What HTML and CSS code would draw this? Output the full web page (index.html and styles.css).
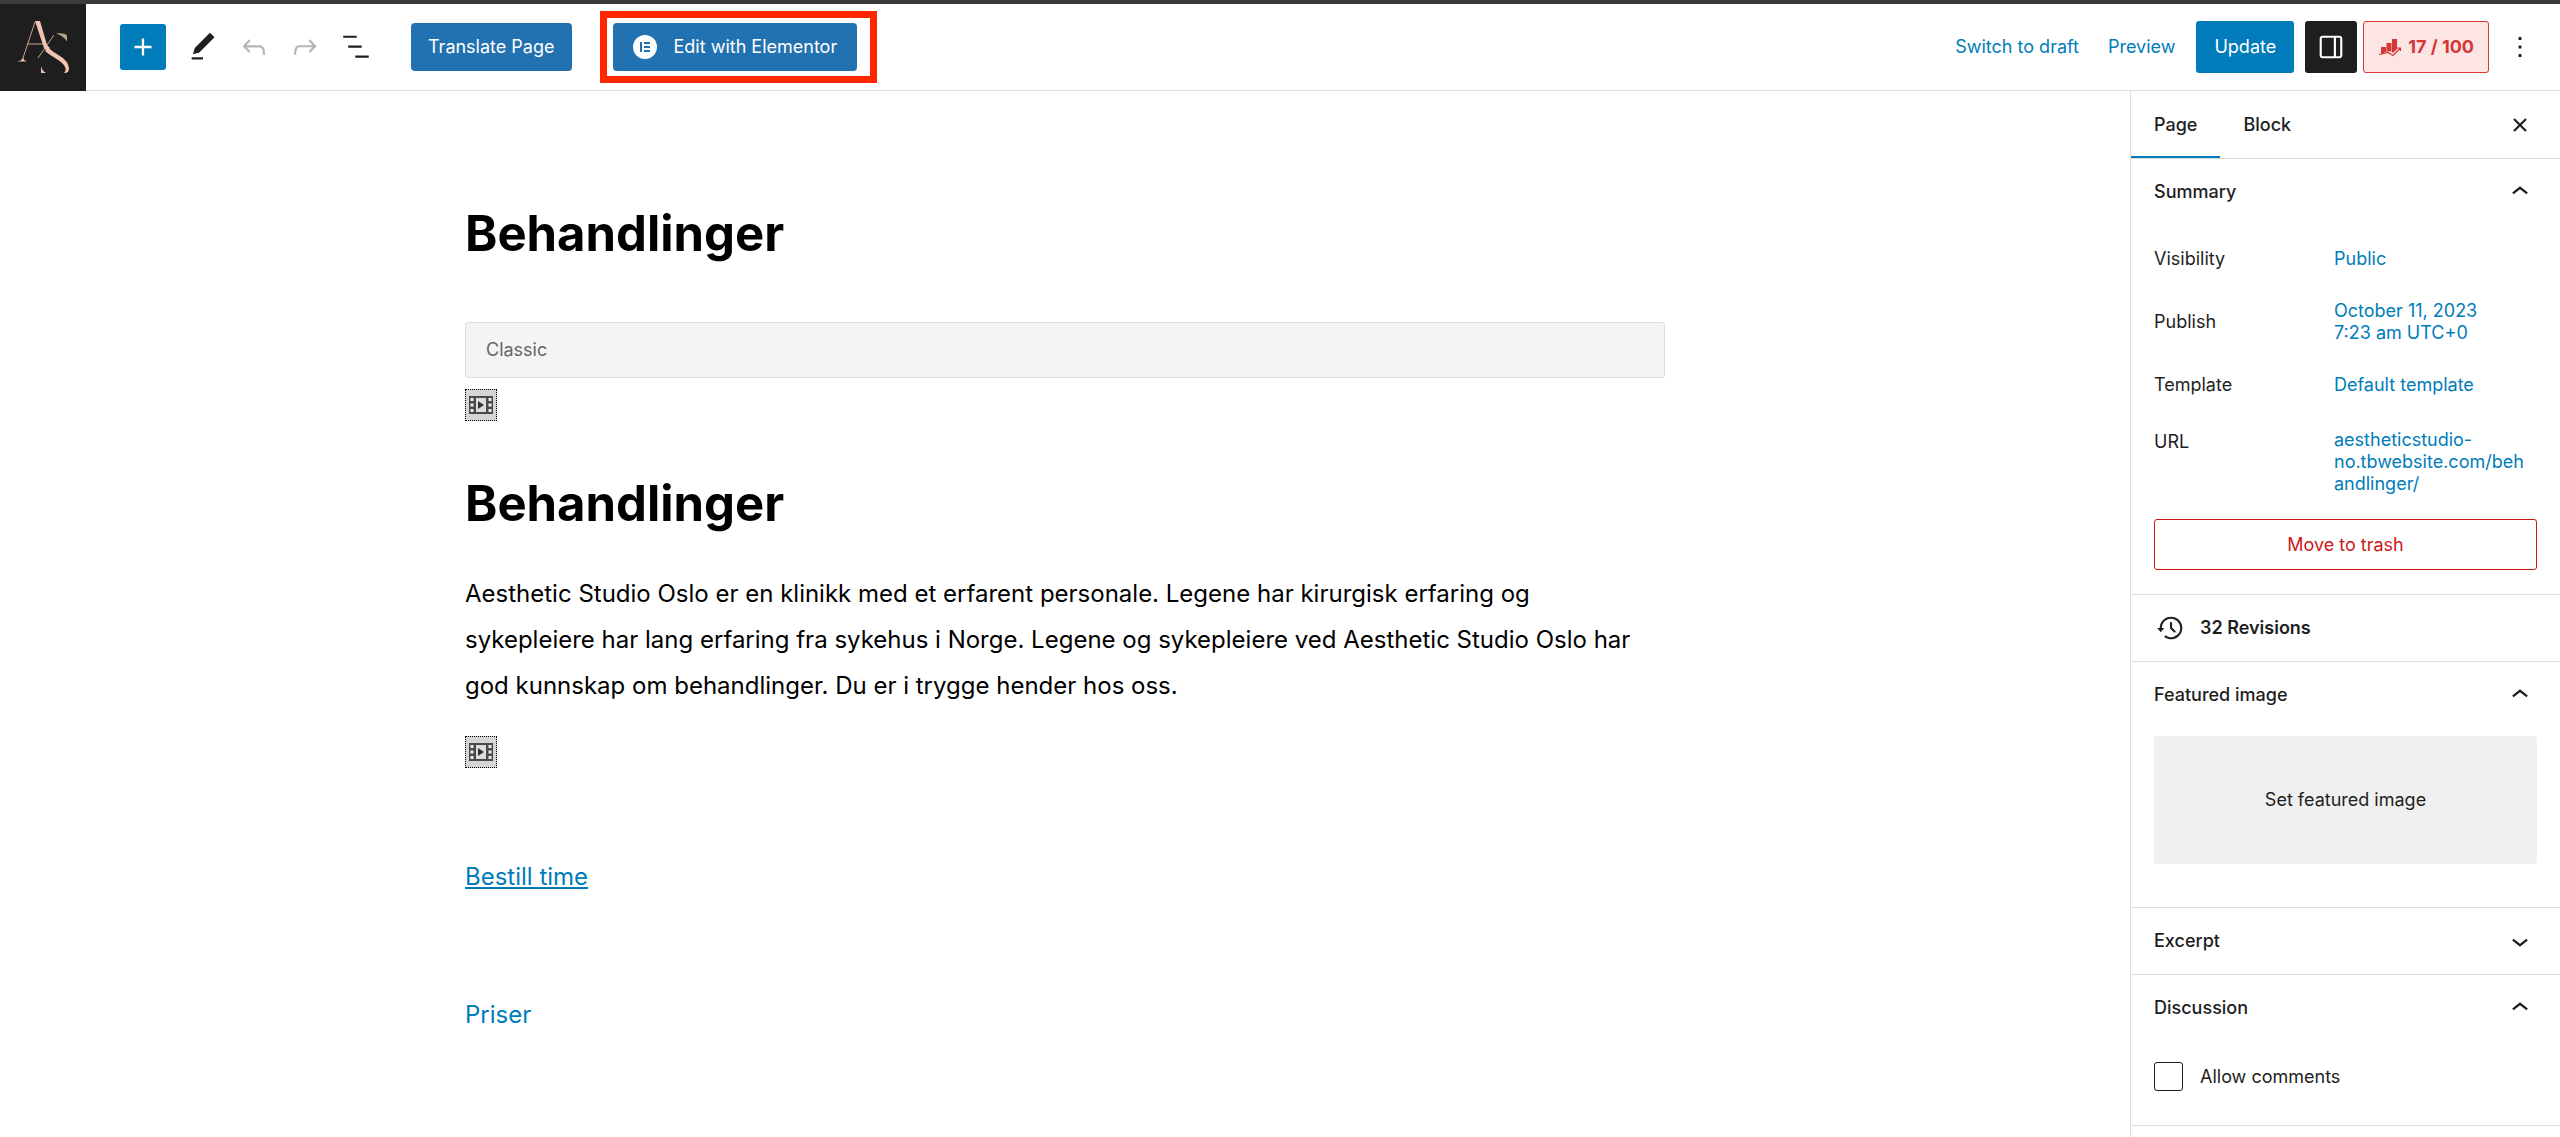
FILE: index.html
```html
<!DOCTYPE html>
<html lang="en">
<head>
  <meta charset="UTF-8" />
  <meta name="viewport" content="width=device-width, initial-scale=1" />
  <title>Edit Page - Behandlinger</title>
  <link rel="stylesheet" href="styles.css">
</head>
<body>

  <header class="header">
    <a href="#" class="site-logo" aria-label="View Pages">
      <svg viewBox="0 0 86 86" fill="none">
        <path d="M35 18 22 57M27 40h17M38 54 54 31" stroke="#c9a291" stroke-width="1"/>
        <path d="M35 17h5l7 24 3 3-3 3-3-3z" fill="#f3c3b1"/>
        <path d="M17 57.500q5-.5 6-4 1 3.500 4 4z" fill="#f3c3b1"/>
        <path d="M56 29.500q8-1 11 2v6q-4-6-11-8z" fill="#b5a58d"/>
        <path d="M48 43c5 7 20 10 21 21 0 3-1 5-5 5 2-2 2-4 1-6-3-7-14-10-20-16z" fill="#f3c3b1"/>
        <path d="M41 62q1 5 5 7h-5z" fill="#f3c3b1"/>
      </svg>
    </a>

    <div class="tools">
      <button class="icon-btn inserter" aria-label="Toggle block inserter">
        <svg viewBox="0 0 24 24"><path d="M18 11.200h-5.200V6h-1.600v5.200H6v1.600h5.200V18h1.600v-5.200H18z"/></svg>
      </button>
      <button class="icon-btn" aria-label="Tools">
        <svg viewBox="0 0 24 24"><path d="m20.100 5.100L16.900 2 6.200 12.700l-1.300 4.400 4.500-1.300L20.100 5.100zM4 20.800h8v-1.500H4v1.500z"/></svg>
      </button>
      <button class="icon-btn" aria-label="Undo" disabled>
        <svg viewBox="0 0 24 24"><path d="M18.300 11.700c-.6-.6-1.400-.9-2.300-.9H6.700l2.900-3.300-1.100-1-4.500 5L8.500 16l1-1-2.700-2.700H16c.5 0 .9.2 1.300.5 1 1 1 3.400 1 4.500v.3h1.500v-.2c0-1.500 0-4.300-1.500-5.700z"/></svg>
      </button>
      <button class="icon-btn" aria-label="Redo" disabled>
        <svg viewBox="0 0 24 24"><path d="M15.600 6.500l-1.100 1 2.900 3.300H8c-.9 0-1.700.3-2.300.9-1.400 1.500-1.400 4.200-1.400 5.600v.2h1.500v-.3c0-1.100 0-3.500 1-4.500.3-.3.7-.5 1.300-.5h9.200L14.500 15l1.100 1.100 4.600-4.600-4.600-5z"/></svg>
      </button>
      <button class="icon-btn" aria-label="Document Overview">
        <svg viewBox="0 0 24 24"><path d="M3 4h9.500v1.500H3V4Zm3.500 7H16v1.500H6.500V11ZM21 18h-9.500v1.500H21V18Z"/></svg>
      </button>
    </div>

    <button class="btn btn-blue">Translate Page</button>
    <div class="highlight">
      <button class="btn btn-blue btn-elementor">
        <svg viewBox="0 0 24 24"><circle cx="12" cy="12" r="12" fill="#fff"/><path d="M7 7h2v10H7zM11 7h6v2h-6zM11 11h6v2h-6zM11 15h6v2h-6z" fill="#2271b1"/></svg>
        Edit with Elementor
      </button>
    </div>

    <div class="settings">
      <button class="link-btn">Switch to draft</button>
      <button class="link-btn">Preview</button>
      <button class="btn btn-primary">Update</button>
      <button class="btn-sidebar" aria-label="Settings">
        <svg viewBox="0 0 24 24"><path d="M18 4H6c-1.100 0-2 .9-2 2v12c0 1.100.9 2 2 2h12c1.100 0 2-.9 2-2V6c0-1.100-.9-2-2-2zm-4 14.500H6c-.3 0-.5-.2-.5-.5V6c0-.3.2-.5.5-.5h8v13zm4.500-.5c0 .3-.2.500-.5.500h-2.500v-13H18c.3 0 .5.2.5.5v12z"/></svg>
      </button>
      <button class="score">
        <svg viewBox="0 0 24 20"><path d="M3 10h5v5l-5 2zM8.500 6h5v9l-2-1-3 1zM14 2h5v10l-4 4-1-1z"/><path d="M1 17.500l9-2 5 3 7-7M19 11h3.500v3" fill="none" stroke="currentColor" stroke-width="1.200"/></svg>
        17 / 100
      </button>
      <button class="icon-btn" aria-label="Options">
        <svg viewBox="0 0 24 24"><path d="M13 19h-2v-2h2v2zm0-6h-2v-2h2v2zm0-6h-2V5h2v2z"/></svg>
      </button>
    </div>
  </header>

  <div class="layout">
    <main class="editor">
      <div class="content">
        <h1 class="heading">Behandlinger</h1>
        <div class="classic-bar">Classic</div>
        <div class="media">
          <svg viewBox="0 0 24 18"><use href="#film"/></svg>
        </div>
        <h2 class="heading">Behandlinger</h2>
        <p class="text">Aesthetic Studio Oslo er en klinikk med et erfarent personale. Legene har kirurgisk erfaring og sykepleiere har lang erfaring fra sykehus i Norge. Legene og sykepleiere ved Aesthetic Studio Oslo har god kunnskap om behandlinger. Du er i trygge hender hos oss.</p>
        <div class="media">
          <svg viewBox="0 0 24 18"><use href="#film"/></svg>
        </div>
        <p class="link-block"><a href="#">Bestill time</a></p>
        <p class="link-block"><a href="#" class="plain">Priser</a></p>
      </div>
    </main>

    <aside class="sidebar">
      <div class="tabs">
        <button class="tab active">Page</button>
        <button class="tab">Block</button>
        <button class="icon-btn close" aria-label="Close Settings">
          <svg viewBox="0 0 24 24"><path d="M12 13.060l3.712 3.713 1.061-1.060L13.061 12l3.712-3.712-1.060-1.060L12 10.938 8.288 7.227l-1.061 1.060L10.939 12l-3.712 3.712 1.060 1.061L12 13.061z"/></svg>
        </button>
      </div>

      <section class="panel">
        <button class="panel-title">Summary <svg viewBox="0 0 24 24"><use href="#chevron-up"/></svg></button>
        <div class="rows">
          <div class="row"><span class="label">Visibility</span><a href="#">Public</a></div>
          <div class="row"><span class="label">Publish</span><a href="#">October 11, 2023<br>7:23 am UTC+0</a></div>
          <div class="row"><span class="label">Template</span><a href="#">Default template</a></div>
          <div class="row row-url"><span class="label">URL</span><a href="#">aestheticstudio-<wbr>no.tbwebsite.com/behandlinger/</a></div>
        </div>
        <button class="btn-trash">Move to trash</button>
      </section>

      <section class="panel">
        <button class="panel-title revisions">
          <svg viewBox="0 0 24 24"><path d="M5.500 12h1.750l-2.500 3-2.500-3H4a8 8 0 1 1 3.134 6.350l.907-1.194A6.500 6.500 0 1 0 5.500 12Zm9.530 1.970-2.280-2.280V8.500a.75.75 0 0 0-1.500 0V12a.747.747 0 0 0 .218.529l1.282-.84-1.280.842 2.500 2.500a.75.75 0 1 0 1.060-1.061Z"/></svg>
          32 Revisions
        </button>
      </section>

      <section class="panel">
        <button class="panel-title">Featured image <svg viewBox="0 0 24 24"><use href="#chevron-up"/></svg></button>
        <button class="featured">Set featured image</button>
      </section>

      <section class="panel">
        <button class="panel-title">Excerpt <svg viewBox="0 0 24 24"><use href="#chevron-down"/></svg></button>
      </section>

      <section class="panel">
        <button class="panel-title">Discussion <svg viewBox="0 0 24 24"><use href="#chevron-up"/></svg></button>
        <div class="check">
          <input type="checkbox" id="allow-comments">
          <label for="allow-comments">Allow comments</label>
        </div>
      </section>
      <section class="panel"></section>
    </aside>
  </div>

  <!-- Shared icons -->
  <svg class="icons">
    <symbol id="chevron-up" viewBox="0 0 24 24"><path d="M6.500 12.400 12 8l5.500 4.400-.9 1.200L12 10l-4.500 3.600-1-1.200z"/></symbol>
    <symbol id="chevron-down" viewBox="0 0 24 24"><path d="M17.500 11.600 12 16l-5.500-4.400.9-1.200L12 14l4.500-3.600 1 1.200z"/></symbol>
    <symbol id="film" viewBox="0 0 24 18">
      <path d="M0 0h24v18H0z" fill="#4a4a4a"/>
      <path d="M7 2h10v14H7z" fill="#ddd"/>
      <path d="M1.500 2h3v3h-3zM1.500 7.500h3v3h-3zM1.500 13h3v3h-3zM19.500 2h3v3h-3zM19.500 7.500h3v3h-3zM19.500 13h3v3h-3z" fill="#eee"/>
      <path d="M9 5l6 4-6 4z" fill="#333"/>
    </symbol>
  </svg>

</body>
</html>
```

FILE: styles.css
```css
:root {
  --dark: #1e1e1e;
  --blue: #007cba;
  --wp-blue: #2271b1;
  --red: #cc1818;
  --line: #ddd;
}

* {
  margin: 0;
  padding: 0;
  box-sizing: border-box;
}

body {
  font-family: Inter, "Liberation Sans", sans-serif;
  font-size: 18px;
  line-height: 22px;
  color: var(--dark);
  background: #fff;
  border-top: 4px solid #3c3c3c;
  min-height: 100vh;
  display: flex;
  flex-direction: column;
}

button {
  font: inherit;
  color: inherit;
  background: none;
  border: none;
  cursor: pointer;
}

svg {
  fill: currentColor;
}

a {
  color: var(--blue);
}

.icons {
  display: none;
}

/* Header */
.header {
  display: flex;
  align-items: center;
  height: 87px;
  border-bottom: 1px solid var(--line);
}

.site-logo {
  width: 86px;
  height: 87px;
  background: var(--dark);
}

.site-logo svg {
  display: block;
  width: 86px;
  height: 86px;
}

.tools {
  display: flex;
  gap: 5px;
  margin: 0 32px 0 34px;
}

.icon-btn {
  display: flex;
  align-items: center;
  justify-content: center;
  width: 46px;
  height: 46px;
  border-radius: 3px;
}

.icon-btn svg {
  width: 34px;
  height: 34px;
}

.icon-btn:disabled {
  color: #b5b5b5;
}

.inserter {
  margin-right: 9px;
  background: var(--blue);
  color: #fff;
}

.btn {
  height: 48px;
  padding: 0 17px;
  border-radius: 4px;
  color: #fff;
  white-space: nowrap;
}

.btn-blue {
  background: var(--wp-blue);
}

.highlight {
  margin-left: 28px;
  padding: 5px 13px 5px 6px;
  border: 7px solid #ff2600;
}

.btn-elementor {
  display: flex;
  align-items: center;
  gap: 17px;
  padding: 0 20px;
}

.btn-elementor svg {
  width: 24px;
  height: 24px;
}

.settings {
  display: flex;
  align-items: center;
  margin-left: auto;
  padding-right: 17px;
}

.link-btn {
  color: var(--blue);
  margin-right: 29px;
}

.link-btn + .btn {
  margin-left: -8px;
}

.btn-primary {
  height: 52px;
  padding: 0 18px;
  background: var(--blue);
  border-radius: 3px;
}

.btn-sidebar {
  display: flex;
  align-items: center;
  justify-content: center;
  width: 52px;
  height: 52px;
  margin: 0 6px 0 11px;
  border-radius: 3px;
  background: var(--dark);
  color: #fff;
}

.btn-sidebar svg {
  width: 34px;
  height: 34px;
}

.score {
  display: flex;
  align-items: center;
  gap: 6px;
  height: 52px;
  padding: 0 14px;
  margin-right: 8px;
  border: 1px solid #d63638;
  border-radius: 3px;
  background: #fce5e2;
  color: #d63638;
  font-weight: 700;
}

.score svg {
  width: 24px;
  height: 20px;
}

/* Editor */
.layout {
  display: flex;
  flex: 1;
}

.editor {
  flex: 1;
  padding: 113px 32px 0;
}

.content {
  max-width: 1200px;
  margin: 0 auto;
  color: #000;
}

.heading {
  font-size: 49px;
  line-height: 60px;
  font-weight: 700;
}

.classic-bar {
  height: 56px;
  margin: 58px 0 11px;
  padding: 0 20px;
  line-height: 54px;
  border: 1px solid var(--line);
  border-radius: 3px;
  background: #f4f4f4;
  color: #666;
}

.media {
  display: flex;
  align-items: center;
  justify-content: center;
  width: 32px;
  height: 32px;
  border: 1px dotted #000;
  background: #d5d5d5;
}

.media svg {
  width: 24px;
  height: 18px;
}

h2.heading {
  margin: 53px 0 37px;
}

.text,
.link-block {
  font-size: 24px;
  line-height: 46px;
}

.text {
  margin-bottom: 27px;
}

.link-block {
  margin: 86px 0 92px;
}

.plain {
  text-decoration: none;
}

/* Sidebar */
.sidebar {
  width: 430px;
  border-left: 1px solid var(--line);
}

.sidebar a {
  text-decoration: none;
}

.tabs {
  display: flex;
  align-items: center;
  height: 67px;
}

.tab {
  height: 67px;
  padding: 0 23px;
  font-weight: 500;
}

.tab.active {
  box-shadow: inset 0 -2px var(--blue);
}

.close {
  margin: 0 17px 0 auto;
}

.panel {
  padding: 0 23px;
  border-top: 1px solid var(--line);
}

.panel-title {
  display: flex;
  align-items: center;
  justify-content: space-between;
  width: 100%;
  height: 66px;
  font-weight: 500;
}

.panel-title svg {
  width: 34px;
  height: 34px;
}

.rows {
  display: grid;
  gap: 12px;
  padding-top: 8px;
}

.row {
  display: grid;
  grid-template-columns: 180px 1fr;
  align-items: center;
  min-height: 51px;
  padding-right: 8px;
}

.row a {
  overflow-wrap: anywhere;
}

.row-url {
  align-items: start;
  padding-top: 7px;
}

.label {
  line-height: 26px;
}

.btn-trash {
  width: 100%;
  height: 51px;
  margin: 24px 0;
  border: 1px solid var(--red);
  border-radius: 3px;
  color: var(--red);
}

.revisions {
  justify-content: flex-start;
  gap: 12px;
  font-weight: 600;
}

.featured {
  width: 100%;
  height: 128px;
  margin: 8px 0 43px;
  border-radius: 3px;
  background: #f0f0f0;
}

.check {
  display: flex;
  align-items: center;
  gap: 17px;
  padding: 21px 0 34px;
}

.check input {
  appearance: none;
  width: 29px;
  height: 29px;
  border: 1px solid var(--dark);
  border-radius: 3px;
}
```
